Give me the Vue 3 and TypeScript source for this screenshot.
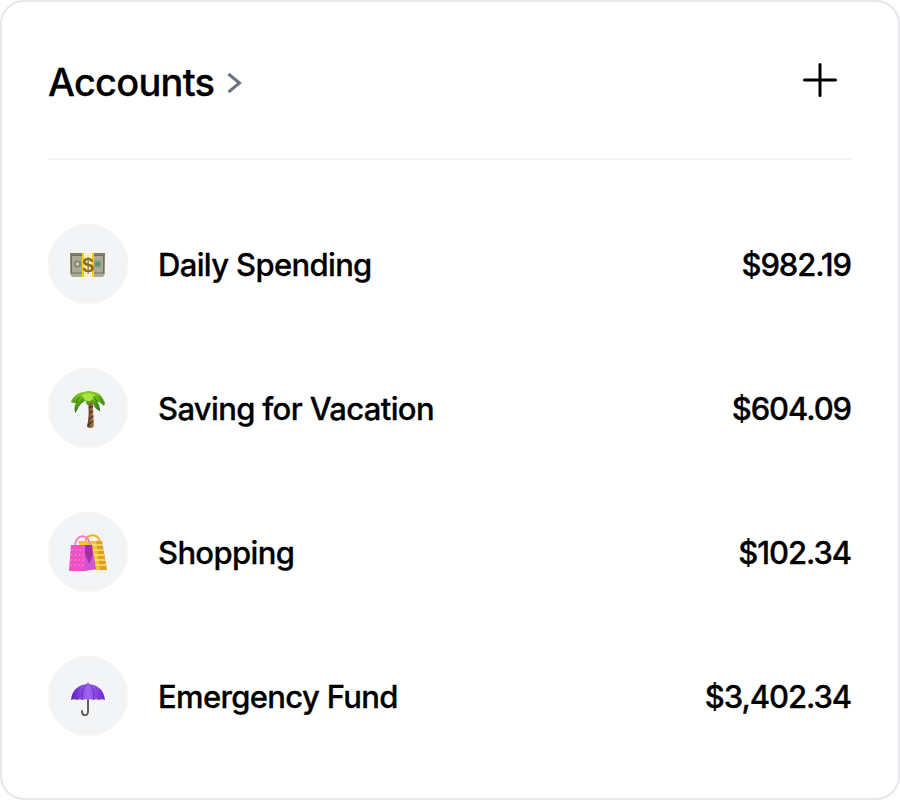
<script setup lang="ts">
interface Account {
  id: string
  name: string
  amount: string
}

const accounts: Account[] = [
  { id: 'money', name: 'Daily Spending', amount: '$982.19' },
  { id: 'palm', name: 'Saving for Vacation', amount: '$604.09' },
  { id: 'bags', name: 'Shopping', amount: '$102.34' },
  { id: 'umbrella', name: 'Emergency Fund', amount: '$3,402.34' },
]
</script>

<template>
  <section class="card">
    <header class="head">
      <div class="title-wrap">
        <h1 class="title">Accounts</h1>
        <svg class="chevron" width="16" height="24" viewBox="0 0 16 24" fill="none">
          <path d="M2.5 3 L13.5 12 L2.5 21" stroke="#6b7280" stroke-width="3" />
        </svg>
      </div>
      <svg class="plus" width="34" height="34" viewBox="0 0 34 34" fill="none">
        <path d="M17 1.5 V32.5 M1.5 17 H32.5" stroke="#000" stroke-width="3" stroke-linecap="round" />
      </svg>
    </header>
    <ul class="list">
      <li v-for="a in accounts" :key="a.id" class="row">
        <span class="avatar">
          <svg v-if="a.id === 'money'" width="40" height="40" viewBox="0 0 40 40">
            <defs>
              <linearGradient id="bill" x1="0" y1="0" x2="0" y2="1">
                <stop offset="0" stop-color="#7d7d68" />
                <stop offset="1" stop-color="#b0b09a" />
              </linearGradient>
            </defs>
            <path d="M2 9 H37 V30 L35 33 H4 L2 30 Z" fill="url(#bill)" />
            <rect x="3.5" y="11.5" width="32" height="17.5" fill="#a9a995" stroke="#6f6f5b" stroke-width="1" />
            <circle cx="9.5" cy="20" r="3.6" fill="#85856f" />
            <circle cx="9.5" cy="20" r="1.8" fill="#cfcfc0" />
            <circle cx="29.5" cy="20" r="3.6" fill="#85917a" />
            <circle cx="29.5" cy="20" r="1.9" fill="#3f9f68" />
            <rect x="14" y="9" width="12" height="24" fill="#ffd000" />
            <rect x="16" y="9" width="8" height="24" fill="#fff2c2" />
            <text x="20" y="27.5" text-anchor="middle" class="dollar">$</text>
          </svg>
          <svg v-else-if="a.id === 'palm'" width="40" height="40" viewBox="0 0 40 40">
            <defs>
              <linearGradient id="trunk" x1="0" y1="0" x2="1" y2="0">
                <stop offset="0" stop-color="#4f3318" />
                <stop offset="1" stop-color="#b98850" />
              </linearGradient>
              <linearGradient id="leaf" x1="0" y1="0" x2="0" y2="1">
                <stop offset="0" stop-color="#86cf22" />
                <stop offset="1" stop-color="#2c7a16" />
              </linearGradient>
            </defs>
            <path d="M20 13 L25 13 C25 22 25.5 31 26 38 C26 40.5 19 40.5 19 38 C21 31 21 22 20 13 Z" fill="url(#trunk)" />
            <path d="M20 37 L25.5 33 M21 31 L25.5 28 M21 25 L25 23 M21 20 L25 18" stroke="#33200d" stroke-width="1" fill="none" />
            <path d="M3 14 C5 8 11 4 16 4 C19 2.5 23 2.5 26 4 C31 4 35 9 37 15 L36 18 C33 15 31 14 29 13.5 C31 16 32 19 32 23 C28 22 25 17 24 13 C22.5 15 21 16 19 17 C18 15 18 14 18 13 C15 14 12.5 15.5 11 18 C10 20 9 23 7.5 25 C6 22 6.5 17 8 15 C6.5 15 4.5 15 3 14 Z" fill="url(#leaf)" />
            <path d="M14 7 C17 4.5 23 4.5 27 7 C26 11 23 13 20 13 C17 13 15 11 14 7 Z" fill="#a9e43f" />
            <path d="M8 15 L11 9 M11 18 L16 10 M29 13.5 L25 8 M32 23 L28 14 M36 17 L31 8" stroke="#256b12" stroke-width=".9" fill="none" opacity=".75" />
          </svg>
          <svg v-else-if="a.id === 'bags'" width="40" height="40" viewBox="0 0 40 40">
            <path d="M17 10 C19 1 30 1 32 10" stroke="#f2ae30" stroke-width="1.8" fill="none" />
            <path d="M10 9 H34 L39 38 H20 Z" fill="#f5c52a" />
            <path d="M28 9 H34 L39 38 H32 Z" fill="#dfa020" />
            <path d="M24 13 H35 M24 18 H36 M24 23 H37 M24 28 H38 M24 33 H38" stroke="#f9e27a" stroke-width="2" fill="none" opacity=".75" />
            <path d="M7 14 C7 1 22 1 22 14" stroke="#f27cc0" stroke-width="1.8" fill="none" />
            <path d="M3 13 H17 L17 39 H1 Z" fill="#f24fc6" />
            <path d="M17 13 H24 L28 37 L17 39 Z" fill="#cf56d3" />
            <path d="M17 13 H24 L24.5 24 L21 32 L17 22 Z" fill="#a02fa8" />
            <path d="M3.5 18 H16 M3 23 H16 M2.5 28 H16 M2 33 H16" stroke="#fb9fe0" stroke-width="1.1" stroke-dasharray="1.5 2.5" fill="none" />
          </svg>
          <svg v-else width="40" height="40" viewBox="0 0 40 40">
            <defs>
              <linearGradient id="canopy" x1="0" y1="0" x2="1" y2="0">
                <stop offset="0" stop-color="#5a1fc4" />
                <stop offset=".5" stop-color="#a266f0" />
                <stop offset="1" stop-color="#6a25cf" />
              </linearGradient>
            </defs>
            <path d="M20 22 V35.5 C20 40.5 14 40.5 14 35" stroke="#5f5f5f" stroke-width="2" fill="none" stroke-linecap="round" />
            <path d="M20 8 C28 8 36 13 37 24 C35 23 33 23 31 24 C29 23 27 23 25.5 24 C23.5 23 21.5 23 20 24 C18.5 23 16.5 23 14.5 24 C13 23 11 23 9 24 C7 23 5 23 3 24 C4 13 12 8 20 8 Z" fill="url(#canopy)" />
            <path d="M20 8 C15 11 13 17 14.5 24 M20 8 C25 11 27 17 25.5 24" stroke="#4d17ad" stroke-width="1" fill="none" opacity=".55" />
            <circle cx="20" cy="7.6" r="1" fill="#8a8a8a" />
          </svg>
        </span>
        <span class="name">{{ a.name }}</span>
        <span class="amount">{{ a.amount }}</span>
      </li>
    </ul>
  </section>
</template>

<style>
html,
body {
  margin: 0;
  background: #fff;
}
</style>

<style scoped>
.card {
  box-sizing: border-box;
  width: 900px;
  height: 800px;
  padding: 0 46px;
  border: 2px solid #e5e7eb;
  border-radius: 24px;
  background: #fff;
  font-family: Inter, "Liberation Sans", sans-serif;
  color: #000;
}
.head {
  display: flex;
  align-items: center;
  justify-content: space-between;
  box-sizing: content-box;
  height: 156px;
  padding-right: 15px;
  border-bottom: 2px solid #f3f4f6;
}
.title-wrap {
  display: flex;
  align-items: center;
  gap: 12px;
  padding-top: 4px;
}
.title {
  margin: 0;
  font-size: 38px;
  font-weight: 500;
  letter-spacing: -0.75px;
  line-height: 44px;
  -webkit-text-stroke: 0.3px #000;
}
.chevron {
  margin-top: 1px;
}
.list {
  list-style: none;
  margin: 0;
  padding: 64px 0 0;
  display: flex;
  flex-direction: column;
  gap: 64px;
}
.row {
  display: flex;
  align-items: center;
  height: 80px;
}
.avatar {
  flex: none;
  display: flex;
  align-items: center;
  justify-content: center;
  width: 80px;
  height: 80px;
  border-radius: 50%;
  background: #f3f4f6;
}
.name,
.amount {
  font-size: 31px;
  font-weight: 500;
  letter-spacing: -0.65px;
  -webkit-text-stroke: 0.3px #000;
}
.name {
  margin-left: 30px;
}
.amount {
  margin-left: auto;
  margin-right: 1px;
  letter-spacing: -1.1px;
}
.dollar {
  font-family: "Liberation Sans", sans-serif;
  font-size: 21px;
  font-weight: 700;
  fill: #8a6a12;
}
</style>
